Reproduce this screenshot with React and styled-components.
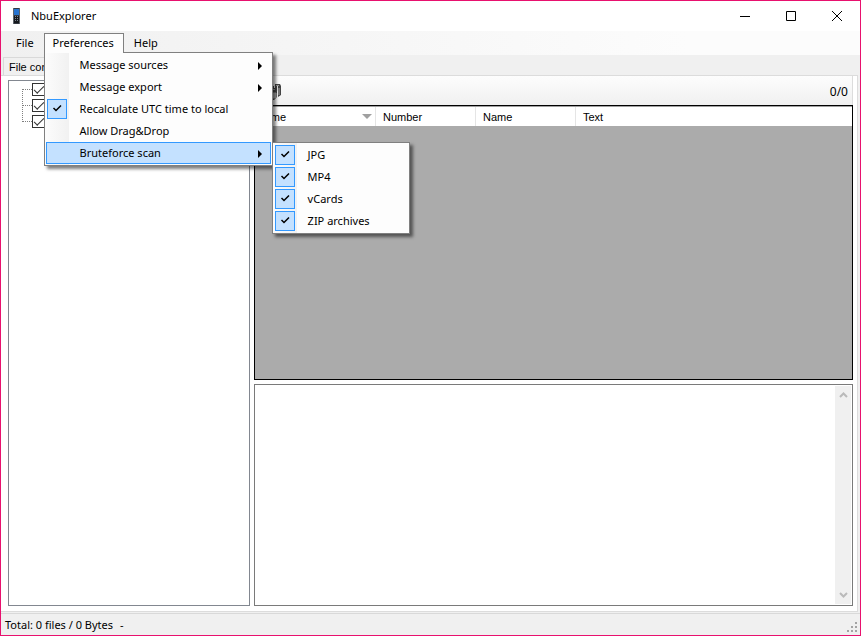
import React, { useState } from 'react';
import styled, { createGlobalStyle, css } from 'styled-components';

const CheckGlyph = () => (
  <svg width="10" height="8" viewBox="0 0 10 8">
    <path d="M1.500 3L4 5.500L9 0.500" fill="none" stroke="#000" strokeWidth="1.5" />
  </svg>
);

const ArrowGlyph = () => (
  <svg width="5" height="8" viewBox="0 0 5 8">
    <path d="M1 0L5 4L1 8Z" fill="#000" />
  </svg>
);

const PhoneIcon = () => (
  <svg width="8" height="16" viewBox="0 0 8 16">
    <rect x="0" y="0" width="7" height="16" fill="#343a42" />
    <rect x="1" y="1" width="5" height="6" fill="#2673cf" />
    <rect x="1" y="8" width="5" height="7" fill="#15181c" />
    <path d="M2 8.5h3M2 10.5h3M2 12.5h3" stroke="#7b838f" strokeWidth="1" strokeDasharray="1 1" />
    <path d="M0.500 0v16M6.500 0v16" stroke="#8a8f96" strokeOpacity="0.5" />
  </svg>
);

const BinocularsIcon = () => (
  <svg width="16" height="16" viewBox="0 0 16 16">
    <path d="M2 4h4V2h3v2h1V0h5l1 2v9l-3 2v-6h-1v6l-3 3H5l-3-3z" fill="#444" />
    <path d="M11 1.500h3M7 5.500h3" stroke="#999" />
    <path d="M14 4v7M8 9h3v5H8z" fill="#a9a9a9" stroke="#a9a9a9" />
    <path d="M12.500 2v5" stroke="#e4e4e4" />
  </svg>
);

const bruteforceItems = ['JPG', 'MP4', 'vCards', 'ZIP archives'];
const columns = ['Time', 'Number', 'Name', 'Text'];

const App = () => {
  const [checked, setChecked] = useState(bruteforceItems);
  const [utc, setUtc] = useState(true);

  const toggle = (name) =>
    setChecked((prev) => (prev.includes(name) ? prev.filter((n) => n !== name) : [...prev, name]));

  return (
    <>
      <GlobalStyle />
      <Window>
        <TitleBar>
          <PhoneIcon />
          <Title>NbuExplorer</Title>
          <CaptionButton aria-label="Minimize">
            <svg width="10" height="10" viewBox="0 0 10 10">
              <path d="M0 5.5h10" stroke="#000" />
            </svg>
          </CaptionButton>
          <CaptionButton aria-label="Maximize">
            <svg width="10" height="10" viewBox="0 0 10 10">
              <path d="M0.5 0.5h9v9h-9z" fill="none" stroke="#000" />
            </svg>
          </CaptionButton>
          <CaptionButton aria-label="Close">
            <svg width="10" height="10" viewBox="0 0 10 10">
              <path d="M0 0l10 10M10 0L0 10" stroke="#000" />
            </svg>
          </CaptionButton>
        </TitleBar>

        <MenuBar>
          <MenuButton>File</MenuButton>
          <MenuSlot>
            <MenuButton $open>Preferences</MenuButton>
            <Menu>
              <MenuItem>
                Message sources
                <ArrowGlyph />
              </MenuItem>
              <MenuItem>
                Message export
                <ArrowGlyph />
              </MenuItem>
              <MenuItem role="menuitemcheckbox" aria-checked={utc} onClick={() => setUtc(!utc)}>
                {utc && (
                  <CheckMark>
                    <CheckGlyph />
                  </CheckMark>
                )}
                Recalculate UTC time to local
              </MenuItem>
              <MenuItem>Allow Drag&amp;Drop</MenuItem>
              <MenuSlot>
                <MenuItem $active>
                  Bruteforce scan
                  <ArrowGlyph />
                </MenuItem>
                <SubMenu>
                  {bruteforceItems.map((name) => (
                    <MenuItem
                      key={name}
                      role="menuitemcheckbox"
                      aria-checked={checked.includes(name)}
                      onClick={() => toggle(name)}
                    >
                      {checked.includes(name) && (
                        <CheckMark>
                          <CheckGlyph />
                        </CheckMark>
                      )}
                      {name}
                    </MenuItem>
                  ))}
                </SubMenu>
              </MenuSlot>
            </Menu>
          </MenuSlot>
          <MenuButton>Help</MenuButton>
        </MenuBar>

        <TabStrip>
          <Tab>File content</Tab>
        </TabStrip>

        <TabPage>
          <Tree>
            {['Messages', 'Contacts', 'Files'].map((name) => (
              <TreeNode key={name}>
                <TreeCheck type="checkbox" defaultChecked aria-label={name} />
              </TreeNode>
            ))}
          </Tree>
          <Detail>
            <ToolBar>
              <ToolButton aria-label="Find">
                <BinocularsIcon />
              </ToolButton>
              <Counter>0/0</Counter>
            </ToolBar>
            <GridArea>
              <Grid>
                <thead>
                  <tr>
                    {columns.map((name, i) => (
                      <HeaderCell key={name} $last={i === columns.length - 1}>
                        <HeaderLabel>
                          {name}
                          {i === 0 && (
                            <svg width="10" height="5" viewBox="0 0 10 5">
                              <path d="M0 0h10L5 5z" fill="#a0a0a0" />
                            </svg>
                          )}
                        </HeaderLabel>
                      </HeaderCell>
                    ))}
                  </tr>
                </thead>
              </Grid>
            </GridArea>
            <Preview>
              <PreviewText aria-label="Message text" readOnly />
              <ScrollBar>
                <ScrollButton aria-label="Scroll up">
                  <svg width="9" height="6" viewBox="0 0 9 6">
                    <path d="M1 5l3.500-3.500L8 5" fill="none" stroke="#bababa" strokeWidth="2" />
                  </svg>
                </ScrollButton>
                <ScrollButton aria-label="Scroll down">
                  <svg width="9" height="6" viewBox="0 0 9 6">
                    <path d="M1 1l3.500 3.500L8 1" fill="none" stroke="#bababa" strokeWidth="2" />
                  </svg>
                </ScrollButton>
              </ScrollBar>
            </Preview>
          </Detail>
        </TabPage>

        <StatusBar>
          <span>Total: 0 files / 0 Bytes</span>
          <span>-</span>
          <svg width="10" height="10" viewBox="0 0 10 10">
            <path
              d="M8 0h2v2h-2zM4 4h2v2h-2zM8 4h2v2h-2zM0 8h2v2h-2zM4 8h2v2h-2zM8 8h2v2h-2z"
              fill="#a3a3a3"
            />
          </svg>
        </StatusBar>
      </Window>
    </>
  );
};

const GlobalStyle = createGlobalStyle`
  *,
  *::before,
  *::after {
    box-sizing: border-box;
  }
  body {
    margin: 0;
    color: #000;
    font-family: 'Noto Sans', 'Open Sans', sans-serif;
    font-size: 11px;
  }
  button {
    margin: 0;
    padding: 0;
    border: 0;
    background: none;
    color: inherit;
    font: inherit;
  }
  svg {
    display: block;
    flex: none;
  }
`;
const Window = styled.div`
  display: flex;
  flex-direction: column;
  height: 100vh;
  overflow: hidden;
  background: #f0f0f0;
  border: 1px solid #e8116e;
`;
const TitleBar = styled.header`
  display: flex;
  align-items: center;
  height: 30px;
  padding-left: 12px;
  background: #fff;
`;
const Title = styled.h1`
  flex: 1;
  margin: 0 0 0 10px;
  padding-bottom: 2px;
  font-size: 11px;
  font-weight: 400;
`;
const CaptionButton = styled.button`
  display: flex;
  align-items: center;
  justify-content: center;
  width: 46px;
  height: 28px;
`;
const MenuBar = styled.nav`
  display: flex;
  gap: 1px;
  height: 24px;
  padding: 2px 6px;
  background: linear-gradient(to right, #f0f0f0, #fcfcfc 80%);
`;
const MenuSlot = styled.div`
  position: relative;
`;
const MenuButton = styled.button`
  height: 20px;
  padding: 0 9px;
  line-height: 18px;
  ${(p) =>
    p.$open &&
    css`
      position: relative;
      z-index: 2;
      padding: 0 9px 2px 8px;
      line-height: 16px;
      background: #fdfdfd;
      border: 1px solid #808080;
      border-bottom: 0;
    `}
`;
const Menu = styled.div`
  position: absolute;
  z-index: 1;
  top: 19px;
  left: 0;
  width: 229px;
  padding: 1px;
  border: 1px solid #808080;
  background: linear-gradient(to right, #fcfcfc, #f1f1f1 24px, #fdfdfd 24px);
  box-shadow: 3px 3px 3px rgba(0, 0, 0, 0.5);
`;
const SubMenu = styled(Menu)`
  top: 0;
  left: 226px;
  width: 138px;
`;
const MenuItem = styled.button`
  position: relative;
  display: flex;
  align-items: center;
  justify-content: space-between;
  width: 100%;
  height: 22px;
  padding: 0 9px 2px 34px;
  text-align: left;
  white-space: nowrap;
  > svg {
    margin-top: 4px;
  }
  ${(p) =>
    p.$active &&
    css`
      background: #c4e1ff;
      box-shadow: inset 0 0 0 1px #3399ff;
    `}
`;
const CheckMark = styled.span`
  position: absolute;
  top: 1px;
  left: 1px;
  display: flex;
  align-items: center;
  justify-content: center;
  width: 20px;
  height: 20px;
  background: #c4e1ff;
  border: 1px solid #3399ff;
`;
const TabStrip = styled.div`
  display: flex;
  align-items: flex-end;
  height: 20px;
  padding-left: 2px;
`;
const Tab = styled.button`
  height: 18px;
  padding: 0 5px;
  border: 1px solid #d9d9d9;
  border-bottom: 0;
  font-family: 'Liberation Sans', Arial, sans-serif;
  font-size: 11px;
`;
const TabPage = styled.main`
  display: flex;
  flex: 1;
  gap: 4px;
  min-height: 0;
  margin: 0 2px 1px 0;
  padding: 0 4px 5px 7px;
  background: #fff;
  border: 1px solid #dcdcdc;
  border-left: 0;
`;
const Tree = styled.div`
  flex: 0 0 242px;
  margin-top: 4px;
  padding: 0 0 0 13px;
  border: 1px solid #828790;
`;
const TreeNode = styled.label`
  display: flex;
  align-items: center;
  height: 16px;
  &::before {
    content: '';
    align-self: flex-start;
    width: 10px;
    height: 9px;
    border-bottom: 1px dotted #808080;
  }
  & + &::before {
    height: 17px;
    margin-top: -8px;
    border-left: 1px dotted #808080;
  }
`;
const TreeCheck = styled.input`
  appearance: none;
  width: 13px;
  height: 13px;
  margin: 0;
  border: 1px solid #333;
  background: #fff;
  &:checked::after {
    content: '';
    display: block;
    width: 10px;
    height: 5px;
    margin: 2px 0 0 1px;
    border-left: 1px solid #333;
    border-bottom: 1px solid #333;
    transform: rotate(-45deg);
  }
`;
const Detail = styled.section`
  display: flex;
  flex: 1;
  flex-direction: column;
  min-width: 0;
`;
const ToolBar = styled.div`
  display: flex;
  align-items: center;
  justify-content: space-between;
  height: 29px;
  padding: 2px 4px 0 11px;
  background: linear-gradient(#fdfdfd, #f0f0f0);
  border-right: 1px solid #dcdcdc;
`;
const ToolButton = styled.button`
  width: 16px;
  height: 16px;
`;
const Counter = styled.span`
  font-size: 12px;
`;
const GridArea = styled.div`
  flex: 5 1 0;
  background: #ababab;
  border: 1px solid #000;
`;
const Grid = styled.table`
  width: 100%;
  border-top: 1px solid #a0a0a0;
  border-spacing: 0;
  table-layout: fixed;
`;
const HeaderCell = styled.th`
  width: ${(p) => (p.$last ? 'auto' : '100px')};
  height: 19px;
  padding: 0 3px 0 7px;
  background: #fff;
  border-right: ${(p) => (p.$last ? '0' : '1px solid #e5e5e5')};
  font-family: 'Liberation Sans', Arial, sans-serif;
  font-size: 11px;
  font-weight: 400;
  text-align: left;
  &:first-child {
    width: 121px;
  }
`;
const HeaderLabel = styled.div`
  display: flex;
  align-items: center;
  justify-content: space-between;
`;
const Preview = styled.div`
  display: flex;
  flex: 4 1 0;
  margin-top: 4px;
  padding: 1px;
  border: 1px solid #7a7a7a;
`;
const PreviewText = styled.textarea`
  flex: 1;
  min-width: 0;
  padding: 2px;
  border: 0;
  outline: 0;
  resize: none;
`;
const ScrollBar = styled.div`
  display: flex;
  flex-direction: column;
  justify-content: space-between;
  width: 16px;
  background: #f0f0f0;
`;
const ScrollButton = styled.button`
  display: flex;
  align-items: center;
  justify-content: center;
  height: 18px;
`;
const StatusBar = styled.footer`
  display: flex;
  align-items: center;
  gap: 7px;
  height: 22px;
  padding: 0 3px 0 4px;
  border-top: 1px solid #d9d9d9;
  svg {
    align-self: flex-end;
    margin: 0 0 3px auto;
  }
`;

export default App;
